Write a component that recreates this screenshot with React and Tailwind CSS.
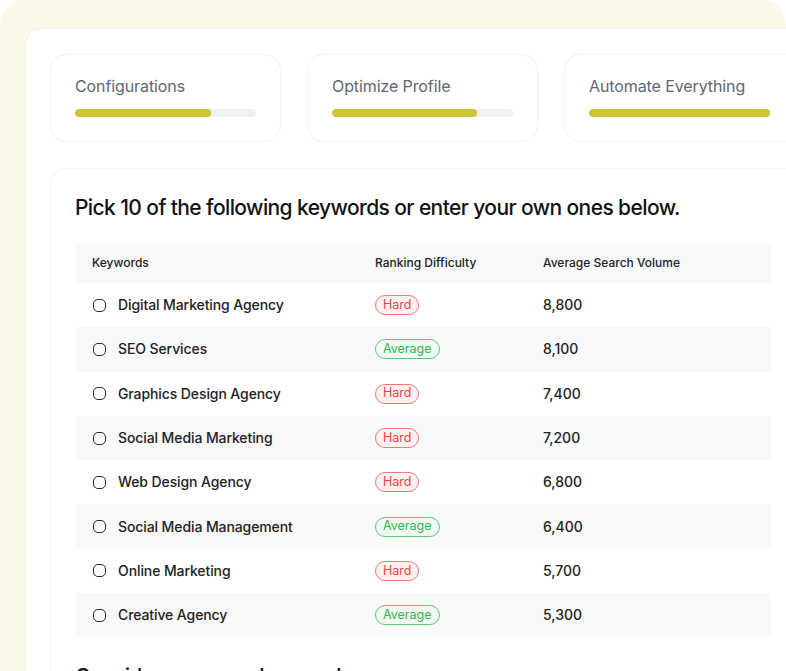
import React from "react";

const steps = [
  { label: "Configurations", pct: 75 },
  { label: "Optimize Profile", pct: 80 },
  { label: "Automate Everything", pct: 100 },
];

const keywords = [
  { name: "Digital Marketing Agency", level: "Hard", volume: "8,800" },
  { name: "SEO Services", level: "Average", volume: "8,100" },
  { name: "Graphics Design Agency", level: "Hard", volume: "7,400" },
  { name: "Social Media Marketing", level: "Hard", volume: "7,200" },
  { name: "Web Design Agency", level: "Hard", volume: "6,800" },
  { name: "Social Media Management", level: "Average", volume: "6,400" },
  { name: "Online Marketing", level: "Hard", volume: "5,700" },
  { name: "Creative Agency", level: "Average", volume: "5,300" },
];

function StepCard({ label, pct, wide }) {
  return (
    <div
      className={`shrink-0 h-[88px] rounded-2xl border border-[#eef0f2] bg-white pl-[24px] pt-[19px] ${
        wide ? "w-[260px]" : "w-[231px]"
      }`}
    >
      <div className="text-[16px] leading-[24px] tracking-[-0.1px] text-[#5f6672]">{label}</div>
      <div className="mt-[11px] h-[8px] w-[181px] rounded-full bg-[#eef0f2] overflow-hidden">
        <div
          className={`h-full bg-[#cfc233] ${pct === 100 ? "rounded-l-full" : "rounded-full"}`}
          style={{ width: `${pct}%` }}
        />
      </div>
    </div>
  );
}

function Badge({ level }) {
  return level === "Hard" ? (
    <span className="inline-flex h-[20px] items-center rounded-full border border-[#f27878] bg-[#fef1f1] px-[7px] text-[12.5px] text-[#e84545]">
      Hard
    </span>
  ) : (
    <span className="inline-flex h-[20px] items-center rounded-full border border-[#5cc97a] bg-[#effbf2] px-[7px] text-[12.5px] text-[#2fb456]">
      Average
    </span>
  );
}

export default function App() {
  return (
    <div
      className="w-[786px] h-[671px] overflow-hidden bg-white"
      style={{ fontFamily: "Inter, 'Noto Sans', sans-serif" }}
    >
      <div className="h-full rounded-t-[24px] bg-[#fdf9ea] pl-[25px] pt-[28px]">
        <div className="h-full w-[800px] rounded-tl-2xl border-l border-t border-[#f3f1e6] bg-white pl-[24px] pt-[25px]">
          <div className="flex gap-[26px]">
            {steps.map((s, i) => (
              <StepCard key={s.label} {...s} wide={i === 2} />
            ))}
          </div>

          <div className="mt-[26px] rounded-2xl border border-[#f0f1f3] pl-[24px] pt-[24px]">
            <h2 className="text-[21px] leading-[30px] font-medium tracking-[-0.6px] text-[#111]">
              Pick 10 of the following keywords or enter your own ones below.
            </h2>

            <div className="mt-[20px] w-[696px]">
              <div className="flex h-[40px] items-center bg-[#f8f9fa] text-[12px] font-medium text-[#222]">
                <div className="w-[300px] pl-[17px]">Keywords</div>
                <div className="w-[168px]">Ranking Difficulty</div>
                <div>Average Search Volume</div>
              </div>
              {keywords.map((k, i) => (
                <div
                  key={k.name}
                  className={`flex h-[44.3px] items-center ${i % 2 === 1 ? "bg-[#f8f9fa]" : ""}`}
                >
                  <div className="flex w-[300px] items-center pl-[18px]">
                    <span className="h-[13px] w-[13px] rounded-[5px] border-[1.5px] border-[#2a2a2a]" />
                    <span className="ml-[12px] text-[14px] leading-[20px] font-medium tracking-[-0.1px] text-[#222]">
                      {k.name}
                    </span>
                  </div>
                  <div className="flex w-[168px] items-center">
                    <Badge level={k.level} />
                  </div>
                  <div className="text-[14px] leading-[20px] font-medium text-[#222]">{k.volume}</div>
                </div>
              ))}
            </div>

            <h3 className="mt-[25px] text-[21px] leading-[30px] font-medium tracking-[-0.6px] text-[#111]">
              Consider your own keywords
            </h3>
          </div>
        </div>
      </div>
    </div>
  );
}
